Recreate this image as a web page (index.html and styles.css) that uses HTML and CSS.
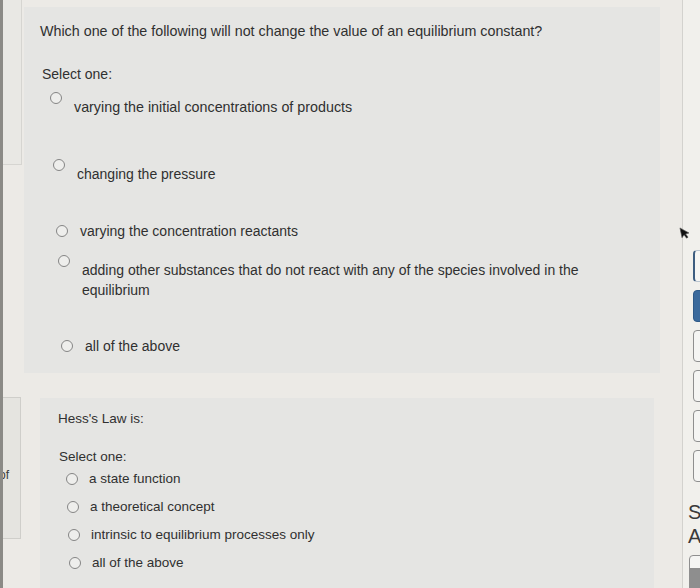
FILE: index.html
```html
<!DOCTYPE html>
<html lang="en">
<head>
<meta charset="utf-8">
<title>Quiz</title>
<link rel="stylesheet" href="styles.css">
</head>
<body>
<div class="page">
  <aside class="rail">
    <div class="rail-panel rail-panel--top"></div>
    <div class="rail-panel rail-panel--info"><span class="rail-text">of</span></div>
  </aside>

  <main class="main">
    <section class="card card--q1">
      <p class="qtext">Which one of the following will not change the value of an equilibrium constant?</p>
      <p class="prompt">Select one:</p>
      <div class="answers">
        <label class="opt opt--drop gap-1"><span class="radio"></span><span class="opt-text">varying the initial concentrations of products</span></label>
        <label class="opt opt--drop gap-2"><span class="radio"></span><span class="opt-text">changing the pressure</span></label>
        <label class="opt gap-3"><span class="radio"></span><span class="opt-text">varying the concentration reactants</span></label>
        <label class="opt opt--drop gap-4"><span class="radio"></span><span class="opt-text">adding other substances that do not react with any of the species involved in the equilibrium</span></label>
        <label class="opt"><span class="radio"></span><span class="opt-text">all of the above</span></label>
      </div>
    </section>

    <section class="card card--q2">
      <p class="qtext">Hess's Law is:</p>
      <p class="prompt">Select one:</p>
      <div class="answers">
        <label class="opt"><span class="radio"></span><span class="opt-text">a state function</span></label>
        <label class="opt"><span class="radio"></span><span class="opt-text">a theoretical concept</span></label>
        <label class="opt"><span class="radio"></span><span class="opt-text">intrinsic to equilibrium processes only</span></label>
        <label class="opt"><span class="radio"></span><span class="opt-text">all of the above</span></label>
      </div>
    </section>
  </main>

  <aside class="side">
    <nav class="qnav">
      <span class="qbox qbox--flag"></span>
      <span class="qbox qbox--current"></span>
      <span class="qbox"></span>
      <span class="qbox"></span>
      <span class="qbox"></span>
      <span class="qbox"></span>
    </nav>
    <p class="side-letter side-letter--first">S</p>
    <p class="side-letter">A</p>
    <span class="qbox qbox--bottom"></span>
  </aside>

  <svg class="cursor" width="10" height="13" viewBox="0 0 10 13" aria-hidden="true">
    <path d="M1 1 L1 11 L3.6 8.6 L5.4 12.4 L7 11.7 L5.3 8 L8.8 7.8 Z" fill="#111" stroke="#555" stroke-width="0.6"/>
  </svg>
</div>
</body>
</html>
```

FILE: styles.css
```css
* { box-sizing: border-box; }

html, body {
  margin: 0;
  padding: 0;
}

body {
  background: #eceae6;
  font-family: "Liberation Sans", Arial, Helvetica, sans-serif;
  color: #303030;
}

.page {
  position: relative;
  display: flex;
  width: 700px;
  height: 588px;
  overflow: hidden;
  background: #eceae6;
}

/* left rail */
.rail {
  width: 22px;
  flex: none;
  border-left: 3px solid #8b8a86;
  overflow: hidden;
}

.rail-panel--top {
  height: 165px;
  background: #e9e8e4;
  border-right: 1px solid #d6d5d1;
  border-bottom: 1px solid #d6d5d1;
}

.rail-panel--info {
  margin-top: 232px;
  width: 18px;
  height: 142px;
  background: #e5e4e0;
  border: 1px solid #cfceca;
  border-left: none;
  padding-top: 70px;
}

.rail-text {
  display: block;
  margin-left: -4px;
  font-size: 12px;
  line-height: 14px;
  color: #3a3a3a;
}

/* main column */
.main {
  flex: 1;
  padding-top: 7px;
}

.card {
  background: #e5e5e3;
}

.card p {
  margin: 0;
}

.card--q1 {
  margin: 0 22px 0 2px;
  height: 366px;
  padding: 14px 0 0 16px;
  font-size: 14px;
  line-height: 20px;
}

.card--q1 .qtext { font-size: 14.3px; }

.card--q2 {
  margin: 25px 28px 0 18px;
  height: 200px;
  padding: 11px 0 0 18px;
  font-size: 13.5px;
  line-height: 20px;
}

.card--q1 .prompt {
  margin-top: 23px;
  margin-left: 2px;
}

.card--q2 .prompt {
  margin-top: 18px;
  margin-left: 1px;
}

.answers {
  display: flex;
  flex-direction: column;
}

.card--q1 .answers {
  margin-top: 8px;
  padding-left: 10px;
}

.card--q2 .answers {
  margin-top: 2px;
  padding-left: 8px;
  gap: 8px;
}

.opt {
  display: flex;
  align-items: flex-start;
  gap: 12px;
}

.card--q2 .opt { gap: 11px; }

.radio {
  flex: none;
  width: 12px;
  height: 12px;
  margin-top: 4px;
  border: 1.4px solid #858585;
  border-radius: 50%;
  background: #eeeeec;
}

.opt--drop .radio { margin-top: 0; }
.opt--drop .opt-text { padding-top: 5px; }

.opt-text { max-width: 500px; }

.card--q1 .opt:first-child .opt-text { font-size: 14.3px; }

/* answer spacing in question 1 */
.gap-1 { margin-bottom: 42px; }
.gap-2 { margin-bottom: 37px; }
.gap-3 { margin-bottom: 14px; }
.gap-4 { margin-bottom: 36px; }

/* perspective drift of the photo */
.card--q1 .opt:nth-child(2) { margin-left: 3px; }
.card--q1 .opt:nth-child(3) { margin-left: 6px; }
.card--q1 .opt:nth-child(4) { margin-left: 8px; }
.card--q1 .opt:nth-child(5) { margin-left: 11px; }
.card--q2 .opt:nth-child(2) { margin-left: 1px; }
.card--q2 .opt:nth-child(3) { margin-left: 2px; }
.card--q2 .opt:nth-child(4) { margin-left: 3px; }

/* right sidebar */
.side {
  width: 18px;
  flex: none;
  background: #f1f0ec;
  border-left: 1px solid #d3d2ce;
  padding: 250px 0 0 10px;
  overflow: hidden;
}

.qnav {
  display: flex;
  flex-direction: column;
  gap: 8px;
}

.qbox {
  display: block;
  width: 26px;
  height: 32px;
  border: 1px solid #8f8f8f;
  border-radius: 4px;
  background: #f5f5f3;
}

.qbox--flag {
  border-left: 2px solid #3d5d80;
  border-color: #b9c4cf;
  border-left-color: #3d5d80;
}

.qbox--current {
  background: #3b6a9c;
  border-color: #2f5a88;
}

.side-letter {
  margin: 0 0 0 -5px;
  font-size: 20px;
  line-height: 24px;
  color: #3a3a3a;
}

.side-letter--first { margin-top: 18px; }

.qbox--bottom {
  margin-top: 7px;
  margin-left: -4px;
  height: 40px;
  background: linear-gradient(#f5f5f3 0 12px, #8e8e8e 12px);
}

.cursor {
  position: absolute;
  left: 680px;
  top: 226px;
  transform: rotate(-12deg);
}
```
